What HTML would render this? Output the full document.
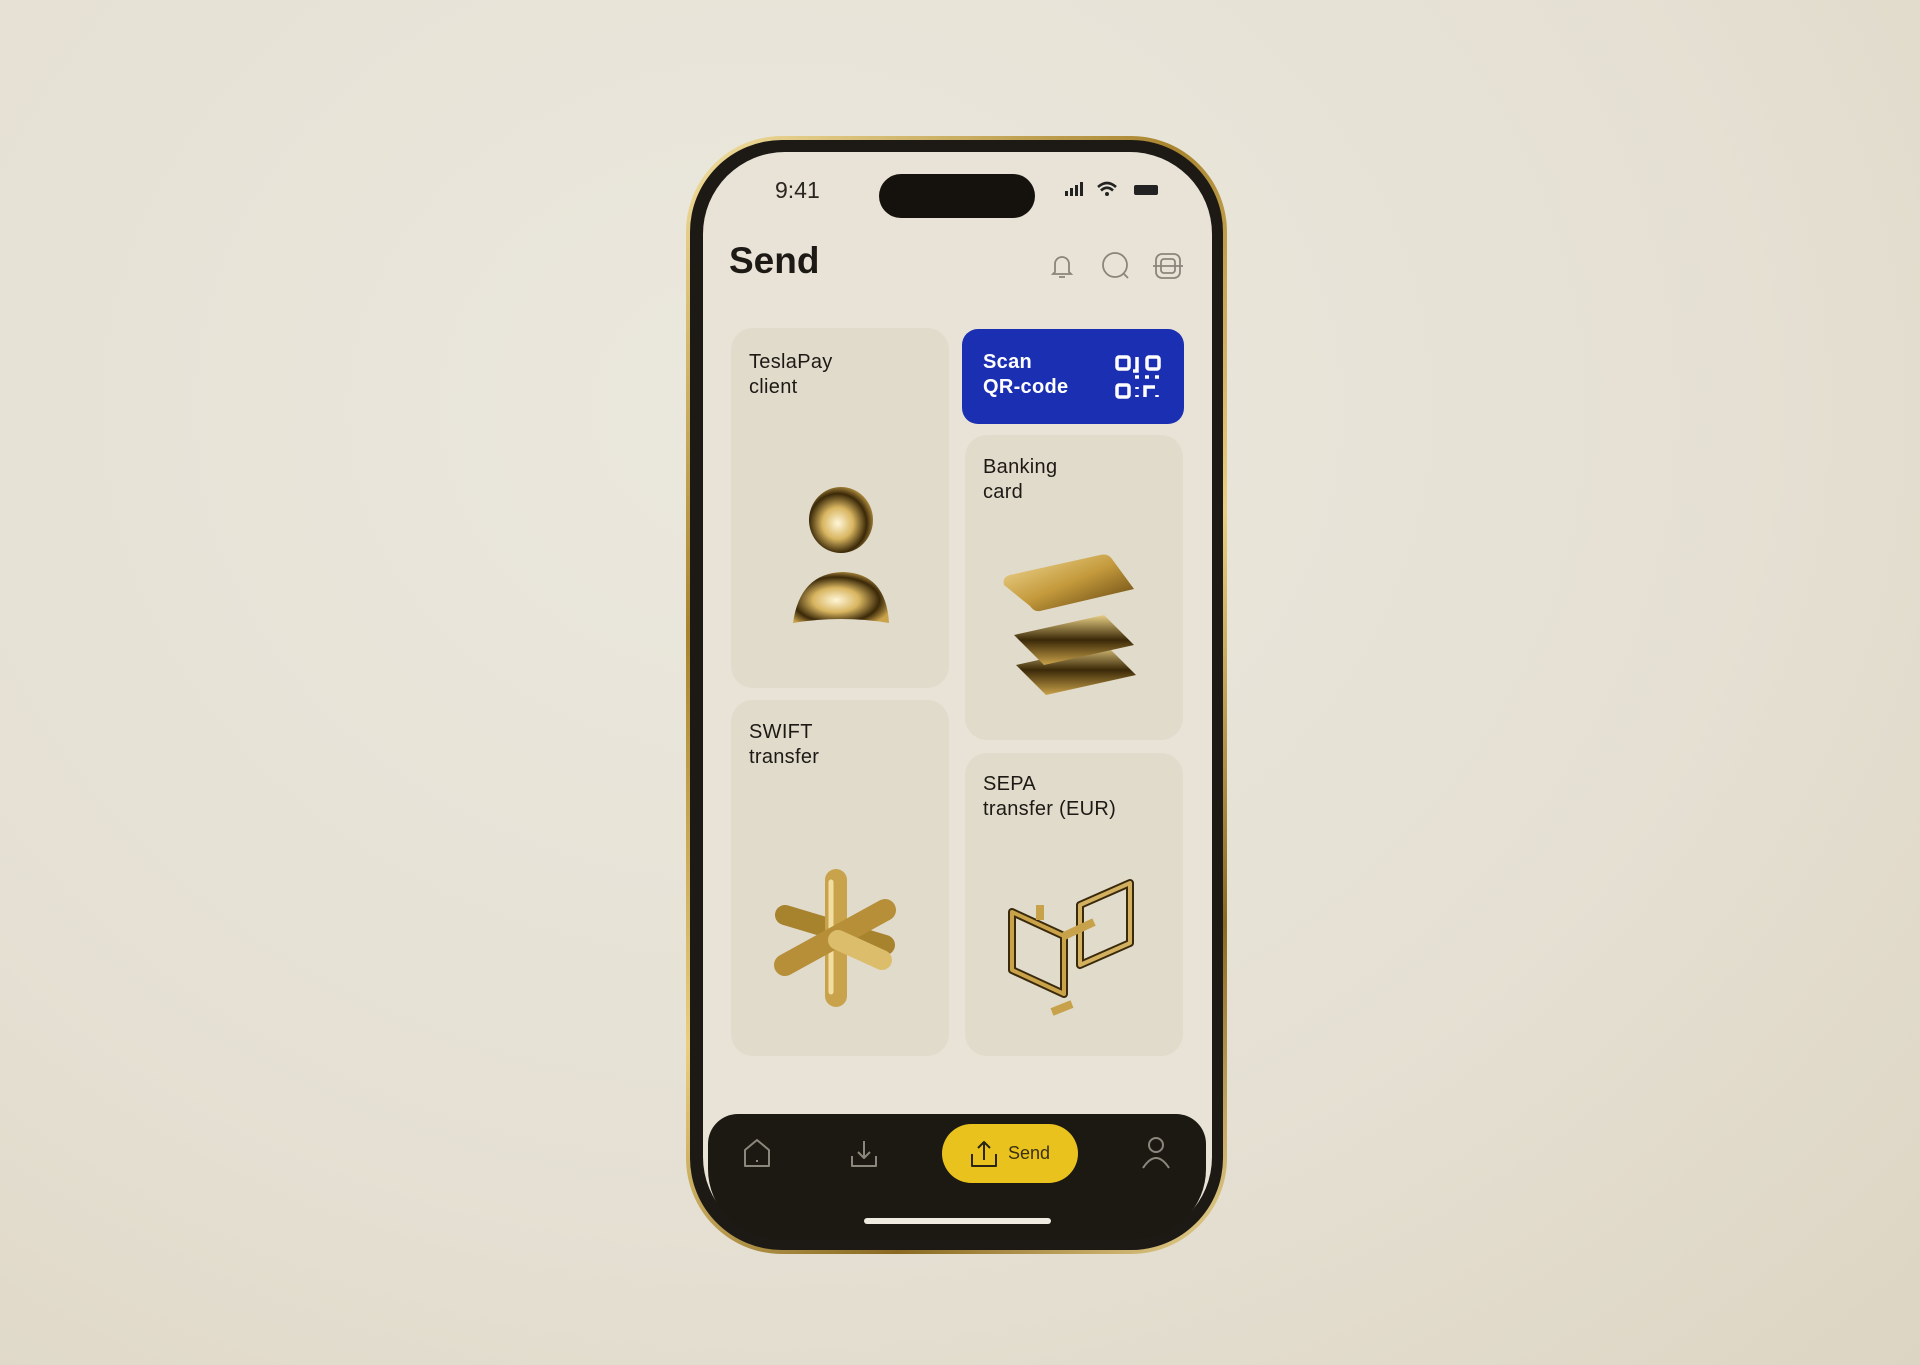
<!DOCTYPE html>
<html><head><meta charset="utf-8"><style>
*{margin:0;padding:0;box-sizing:border-box}
body{width:1920px;height:1365px;overflow:hidden;background:radial-gradient(ellipse at 40% 30%,#ebe8de 0%,#e5e0d3 60%,#ddd5c3 100%);font-family:"Liberation Sans",sans-serif;position:relative}
.abs{position:absolute}
.phone{left:686px;top:136px;width:541px;height:1118px;border-radius:96px;background:linear-gradient(135deg,#f3e0a0,#a8842e 30%,#e9cf80 55%,#8a6a22 80%,#e8d290);}
.bezel{left:690px;top:140px;width:533px;height:1110px;border-radius:92px;background:#1d1a15}
.screen{left:703px;top:152px;width:509px;height:1087px;border-radius:82px;background:#e8e3d6;overflow:hidden}
.card{position:absolute;background:#e1dbcc;border-radius:22px}
.lbl{position:absolute;font-size:20px;line-height:25px;color:#1d1a15;letter-spacing:.3px}
</style></head><body>
<div class="abs phone"></div>
<div class="abs bezel"></div>
<div class="abs screen"></div>
<div class="abs" style="left:775px;top:177px;font-size:23px;color:#2a2620">9:41</div>
<div class="abs" style="left:879px;top:174px;width:156px;height:44px;border-radius:22px;background:#15120e"></div>
<svg class="abs" style="left:1062px;top:180px" width="102" height="20">
<rect x="3" y="11" width="3" height="5" fill="#222"/><rect x="8" y="8" width="3" height="8" fill="#222"/><rect x="13" y="5" width="3" height="11" fill="#222"/><rect x="18" y="2" width="3" height="14" fill="#222"/>
<path d="M36 7 Q45 -1 54 7" stroke="#222" stroke-width="2.6" fill="none"/><path d="M39 10.5 Q45 5 51 10.5" stroke="#222" stroke-width="2.6" fill="none"/><circle cx="45" cy="14" r="2" fill="#222"/>
<rect x="72" y="5" width="24" height="10" rx="2" fill="#222"/>
</svg>
<div class="abs" style="left:729px;top:240px;font-size:37px;font-weight:bold;color:#1d1a15">Send</div>
<svg class="abs" style="left:1048px;top:250px" width="135" height="32" fill="none" stroke="#8a857a" stroke-width="1.8">
<path d="M7 22 V14 a7 7 0 0 1 14 0 V22 l2 2 H5 z M11 27 h6"/>
<circle cx="67" cy="15" r="12"/><path d="M76 24 l4 4"/>
<rect x="108" y="4" width="24" height="24" rx="6"/><rect x="113" y="9" width="14" height="14" rx="3"/><path d="M105 16 h30"/>
</svg>
<div class="card" style="left:731px;top:328px;width:218px;height:360px"></div>
<div class="card" style="left:962px;top:329px;width:222px;height:95px;background:#1b2fb3;border-radius:16px"></div>
<div class="card" style="left:965px;top:435px;width:218px;height:305px"></div>
<div class="card" style="left:731px;top:700px;width:218px;height:356px"></div>
<div class="card" style="left:965px;top:753px;width:218px;height:303px"></div>
<div class="lbl" style="left:749px;top:350px">TeslaPay<br>client</div>
<div class="lbl" style="left:983px;top:350px;color:#fff;font-weight:bold">Scan<br>QR-code</div>
<svg class="abs" style="left:1115px;top:355px" width="46" height="44" fill="none" stroke="#fff" stroke-width="3.5">
<rect x="2" y="2" width="12" height="12" rx="2"/><rect x="32" y="2" width="12" height="12" rx="2"/><rect x="2" y="30" width="12" height="12" rx="2"/>
<path d="M22 2 v14 h-4 M20 22 h4 M30 22 h4 M40 22 h4 M22 32 v2 M22 40 v2 M30 42 v-10 h10 M42 40 v2"/>
</svg>
<div class="lbl" style="left:983px;top:455px">Banking<br>card</div>
<div class="lbl" style="left:749px;top:720px">SWIFT<br>transfer</div>
<div class="lbl" style="left:983px;top:772px">SEPA<br>transfer (EUR)</div>
<svg class="abs" style="left:0;top:0" width="1920" height="1365">
<defs>
<radialGradient id="g1" cx="45%" cy="55%" r="60%"><stop offset="0" stop-color="#fff6d8"/><stop offset=".4" stop-color="#d8b560"/><stop offset=".75" stop-color="#3a2808"/><stop offset="1" stop-color="#c9a24a"/></radialGradient>
<linearGradient id="g2" x1="0" y1="0" x2="1" y2="1"><stop offset="0" stop-color="#f2dc9a"/><stop offset=".5" stop-color="#c49a3c"/><stop offset="1" stop-color="#5a3d0c"/></linearGradient>
<linearGradient id="g3" x1="0" y1="0" x2="0" y2="1"><stop offset="0" stop-color="#e8cf85"/><stop offset=".5" stop-color="#3a2808"/><stop offset="1" stop-color="#c9a24a"/></linearGradient>
</defs>
<ellipse cx="841" cy="520" rx="32" ry="33" fill="url(#g1)"/>
<path d="M793 623 Q800 573 843 572 Q886 573 889 623 Q841 615 793 623z" fill="url(#g1)"/>
<path d="M1016 665 l90 -20 l30 30 l-90 20z" fill="url(#g3)"/>
<path d="M1014 635 l90 -20 l30 30 l-90 20z" fill="url(#g3)"/>
<path d="M1004 585 q-2 -8 6 -10 l90 -20 q8 -2 12 4 l22 30 l-94 22 q-6 1 -10 -5z" fill="url(#g2)"/>
<g stroke-linecap="round" fill="none">
<path d="M785 915 l100 30" stroke="#a8832e" stroke-width="20"/>
<path d="M836 880 v116" stroke="#c9a34c" stroke-width="22"/>
<path d="M831 882 v110" stroke="#f2dea0" stroke-width="5"/>
<path d="M785 965 l100 -55" stroke="#b68f38" stroke-width="22"/>
<path d="M838 940 l44 20" stroke="#dcbd6c" stroke-width="20"/>
</g>
<g fill="none" stroke-width="8" stroke-linejoin="round">
<path d="M1012 912 l52 24 v58 l-52 -24z" stroke="#3a2a0c"/>
<path d="M1012 912 l52 24 v58 l-52 -24z" stroke="#c9a24a" stroke-width="4"/>
<path d="M1080 905 l50 -22 v60 l-50 22z" stroke="#3a2a0c"/>
<path d="M1080 905 l50 -22 v60 l-50 22z" stroke="#d2b060" stroke-width="4"/>
<path d="M1064 936 l30 -14 M1040 920 v-15 M1052 1012 l20 -8" stroke="#c8a24a"/>
</g>
</svg>
<div class="abs" style="left:708px;top:1114px;width:498px;height:125px;background:#1c1912;border-radius:30px 30px 70px 70px"></div>
<div class="abs" style="left:942px;top:1124px;width:136px;height:59px;border-radius:30px;background:#e9c21e"></div>
<svg class="abs" style="left:740px;top:1136px" width="440" height="36" fill="none" stroke-width="2" stroke-linejoin="round">
<path d="M5 14 l12 -10 l12 10 v16 h-24z" stroke="#8c877c"/><path d="M17 24 v2" stroke="#8c877c"/>
<path d="M112 20 v10 h24 v-10 M124 5 v17 M118 16 l6 6 l6 -6" stroke="#8c877c"/>
<path d="M232 18 v12 h24 v-12 M244 24 v-18 M238 12 l6 -6 l6 6" stroke="#2a2410"/>
<circle cx="416" cy="9" r="7" stroke="#8c877c"/><path d="M403 32 q13 -20 26 0" stroke="#8c877c"/>
</svg>
<div class="abs" style="left:1008px;top:1143px;font-size:18px;color:#3a3010">Send</div>
<div class="abs" style="left:864px;top:1218px;width:187px;height:6px;border-radius:3px;background:#f0ebe0"></div>
</body></html>
